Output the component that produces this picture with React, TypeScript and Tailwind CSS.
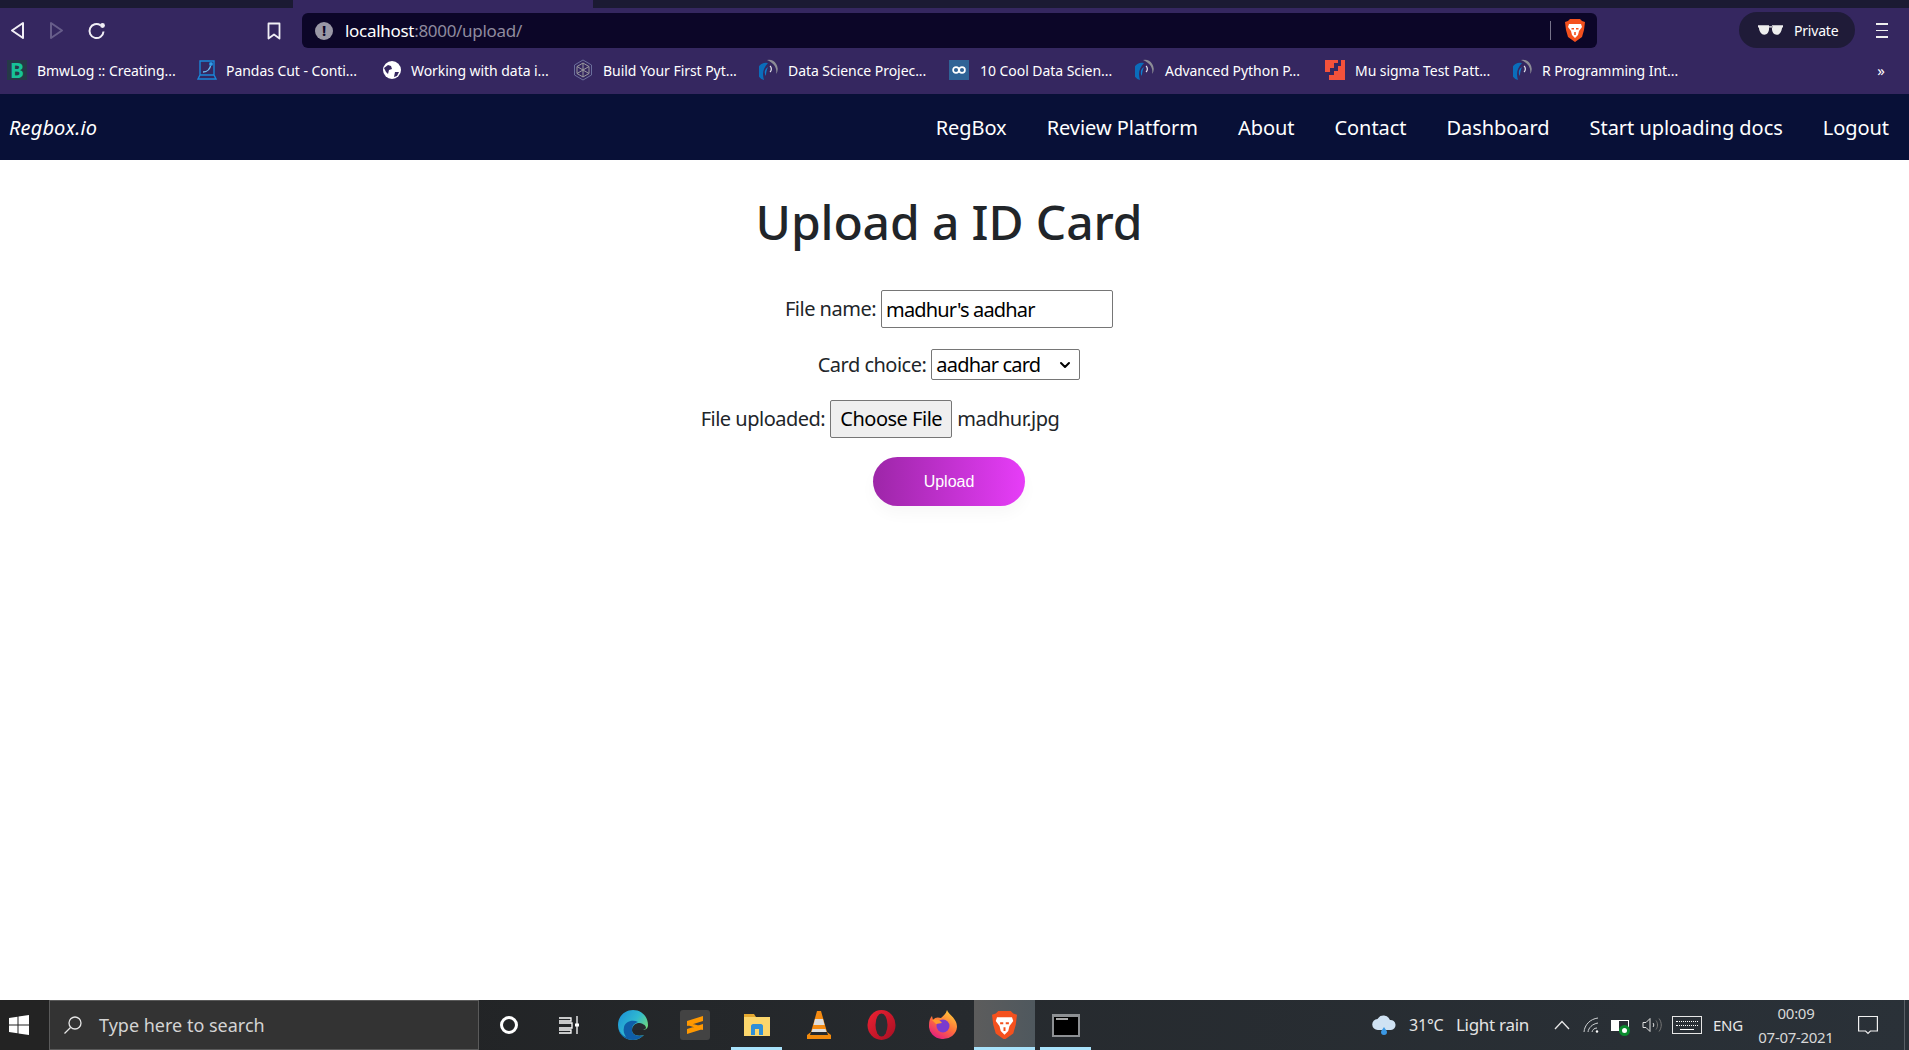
import { ChevronDown } from 'lucide-react';

const ui = "font-['Noto_Sans','Open_Sans',sans-serif]";

function Flaky() {
  return (
    <svg width="20" height="22" viewBox="0 0 20 22" className="shrink-0">
      <path d="M9 4A8.500 8.500 0 0 0 5 21C3 15 4 9 9 4Z" fill="#0a6dbb" />
      <path d="M9 8a6 6 0 0 0-2 9c0-3 .5-6 2-9Z" fill="#0d7fd0" />
      <path d="M8 1a9 9 0 0 1 9 14c1.500-6-2-11-9-14Z" fill="#8d8d96" />
      <path d="M11 7c1.800 1.500 1.800 4.500 0 6" stroke="#e8e8ee" strokeWidth="1.200" fill="none" />
    </svg>
  );
}

function BookmarkIcon({ kind }: { kind: string }) {
  if (kind === 'b') {
    return (
      <span className="flex h-5 w-5 shrink-0 items-center justify-center bg-[#263a48] text-[21px] leading-none font-bold text-[#17c397]">
        B
      </span>
    );
  }
  if (kind === 'pandas') {
    return (
      <svg width="20" height="22" viewBox="0 0 20 22" fill="none" stroke="#1a86d8" strokeWidth="1.400" className="shrink-0">
        <path d="M3 2h14v14H3zM1 20l2-4h14l2 4z" />
        <path d="M6 13c4 0 7-2 8-8" stroke="#6fbdf0" />
        <circle cx="14" cy="5" r="1.400" fill="#6fbdf0" />
      </svg>
    );
  }
  if (kind === 'globe') {
    return (
      <svg width="18" height="18" viewBox="0 0 18 18" className="shrink-0">
        <circle cx="9" cy="9" r="9" fill="#fff" />
        <path d="M1 7l4-3 3 1 1 3-3 1-1 4-2-2zM12 11h4l-2 4-3 1z" fill="#352760" />
      </svg>
    );
  }
  if (kind === 'build') {
    return (
      <svg width="20" height="22" viewBox="0 0 20 22" fill="none" stroke="#6b6f9c" strokeWidth="1" className="shrink-0">
        <path d="M10 1l8.500 5v10L10 21l-8.500-5V6z" />
        <path d="M10 4l6 3.500v7L10 18l-6-3.500v-7zM10 4v14M4 7.500l12 7M16 7.500l-12 7" stroke="#9a9a9f" />
      </svg>
    );
  }
  if (kind === 'cool') {
    return (
      <span className="flex h-5 w-5 shrink-0 items-center justify-center bg-[#2f6396]">
        <svg width="14" height="8" viewBox="0 0 14 8" fill="none" stroke="#fff" strokeWidth="1.700">
          <circle cx="4" cy="4" r="2.900" />
          <circle cx="10" cy="4" r="2.900" />
        </svg>
      </span>
    );
  }
  if (kind === 'mu') {
    return (
      <svg width="20" height="20" viewBox="0 0 20 20" className="shrink-0">
        <path d="M0 0h13v3H9v5H5v4H0z" fill="#f4523b" />
        <path d="M20 0v20H4v-5h5v-4h4V6h3V0z" fill="#f4523b" />
      </svg>
    );
  }
  return <Flaky />;
}

const bookmarks = [
  { kind: 'b', label: 'BmwLog :: Creating...', width: 'w-[190px]', gap: 'gap-[10px]' },
  { kind: 'pandas', label: 'Pandas Cut - Conti...', width: 'w-[186px]', gap: 'gap-[9px]' },
  { kind: 'globe', label: 'Working with data i...', width: 'w-[190px]', gap: 'gap-[10px]' },
  { kind: 'build', label: 'Build Your First Pyt...', width: 'w-[186px]', gap: 'gap-[10px]' },
  { kind: 'flaky', label: 'Data Science Projec...', width: 'w-[190px]', gap: 'gap-[9px]' },
  { kind: 'cool', label: '10 Cool Data Scien...', width: 'w-[186px]', gap: 'gap-[11px]' },
  { kind: 'flaky', label: 'Advanced Python P...', width: 'w-[190px]', gap: 'gap-[10px]' },
  { kind: 'mu', label: 'Mu sigma Test Patt...', width: 'w-[188px]', gap: 'gap-[10px]' },
  { kind: 'flaky', label: 'R Programming Int...', width: 'w-[190px]', gap: 'gap-[9px]' },
];

function BraveLion({ size = 20 }: { size?: number }) {
  return (
    <svg width={size} height={size * 1.15} viewBox="0 0 20 23">
      <path d="M5 0h10l2 2 3 1-1 8-2 7-7 5-7-5-2-7-1-8 3-1z" fill="#f4511e" />
      <path d="M4 5l4 0h4l4 0 1 3-3 4-1 4-3 3-3-3-1-4-3-4z" fill="#fff" />
      <path d="M6.500 9h2.500v1.500H6.500zM11 9h2.500v1.500H11zM9.200 13h1.600v3H9.200z" fill="#f4511e" />
    </svg>
  );
}

function BrowserChrome() {
  return (
    <div className={`bg-[#352760] ${ui}`}>
      <div className="flex h-2 bg-[#1b1a33]">
        <div className="ml-[293px] w-[300px] bg-[#352760]" />
      </div>
      <div className="flex h-[40px] items-end">
        <div className="flex h-[35px] w-[302px] shrink-0 items-center">
          <svg width="16" height="20" viewBox="0 0 16 20" fill="none" stroke="#f1eff6" strokeWidth="2" strokeLinejoin="round" className="ml-[9px]">
            <path d="M14 2v15L3 9.500z" />
          </svg>
          <svg width="16" height="20" viewBox="0 0 16 20" fill="none" stroke="#675d8a" strokeWidth="2" strokeLinejoin="round" className="ml-[24px]">
            <path d="M2 2v15l11-7.500z" />
          </svg>
          <svg width="20" height="20" viewBox="0 0 20 20" fill="none" className="ml-[22px]">
            <path d="M16.500 10.500a7 7 0 1 1-3-6.200" stroke="#f1eff6" strokeWidth="2" />
            <circle cx="15.500" cy="4.500" r="2.400" fill="#f1eff6" />
          </svg>
          <svg width="14" height="18" viewBox="0 0 14 18" fill="none" stroke="#f1eff6" strokeWidth="1.800" strokeLinejoin="round" className="ml-[160px]">
            <path d="M1.500 1.500h11v15L7 12.500l-5.500 4z" />
          </svg>
        </div>
        <div className="flex h-[35px] w-[1295px] shrink-0 items-center rounded-md bg-[#0c0628]">
          <span className="ml-[13px] flex h-[18px] w-[18px] items-center justify-center rounded-full bg-[#9a98a6] text-[15px] leading-none font-bold text-[#0c0628]">
            !
          </span>
          <span className="ml-[12px] text-[17px] tracking-[-0.3px] text-white">
            localhost<span className="text-[#8f8b9f]">:8000/upload/</span>
          </span>
          <div className="ml-auto h-[19px] w-px bg-[#77738a]" />
          <div className="mr-[12px] ml-[14px] flex">
            <BraveLion size={20} />
          </div>
        </div>
        <div className="ml-[142px] flex h-9 w-[116px] shrink-0 items-center rounded-full bg-[#1f1b38]">
          <svg width="25" height="10" viewBox="0 0 26 10" fill="#eeeeee" className="ml-[19px]">
            <path d="M0 0h11.500v3.500C11.500 7 9.500 10 6.500 10 3.500 10 1.500 7 1 3L0 2zM26 0H14.500v3.500c0 3.500 2 6.500 5 6.500s5-3 5.500-7l1-1zM11 1h4v1.500h-4z" />
          </svg>
          <span className="ml-[11px] text-[14px] tracking-[-0.2px] text-white">Private</span>
        </div>
        <div className="ml-[21px] flex h-[35px] w-3 flex-col items-center justify-center gap-[5px]">
          <div className="h-[1.500px] w-3 bg-[#eeeeee]" />
          <div className="h-[1.500px] w-3 bg-[#eeeeee]" />
          <div className="h-[1.500px] w-3 bg-[#eeeeee]" />
        </div>
      </div>
      <div className="flex h-[46px] items-center pr-[24px] pb-[2px] pl-[7px] text-[14px] text-white">
        {bookmarks.map((b) => (
          <div key={b.label} className={`flex shrink-0 items-center ${b.width} ${b.gap}`}>
            <BookmarkIcon kind={b.kind} />
            <span className="tracking-[-0.05px] whitespace-nowrap">{b.label}</span>
          </div>
        ))}
        <span className="ml-auto text-[15px] leading-none">»</span>
      </div>
    </div>
  );
}

function Navbar() {
  const links = ['RegBox', 'Review Platform', 'About', 'Contact', 'Dashboard', 'Start uploading docs', 'Logout'];
  return (
    <nav className={`flex h-[66px] items-center justify-between bg-[#081037] pt-[2px] pr-[20px] pl-[9px] text-[#ffffff] ${ui}`}>
      <a className="text-[20px] tracking-[0.12px] italic">Regbox.io</a>
      <ul className="flex gap-[40px] text-[20px] tracking-[-0.05px]">
        {links.map((l) => (
          <li key={l}>{l}</li>
        ))}
      </ul>
    </nav>
  );
}

function UploadForm() {
  return (
    <main className={`flex flex-1 flex-col items-center bg-white pr-[11px] text-[20px] tracking-[-0.5px] text-[#212529] ${ui}`}>
      <h1 className="mt-[27px] text-[48px] leading-[70px] font-medium tracking-[-0.12px]">Upload a ID Card</h1>
      <form className="mt-[33px] flex flex-col items-center">
        <p className="flex items-center gap-[5px]">
          <label>File name:</label>
          <input
            readOnly
            value="madhur's aadhar"
            className="h-[38px] w-[232px] rounded-[2px] border border-[#767676] px-1 tracking-[-0.85px] text-black outline-none"
          />
        </p>
        <p className="mt-[21px] flex items-center gap-[5px]">
          <label>Card choice:</label>
          <span className="flex h-[31px] w-[149px] items-center justify-between rounded-[2px] border border-[#767676] pr-[6px] pl-1 tracking-[-0.8px] text-black">
            aadhar card
            <ChevronDown size={16} strokeWidth={3} />
          </span>
        </p>
        <p className="mt-[20px] flex items-center gap-[5px]">
          <label>File uploaded:</label>
          <button type="button" className="h-[38px] w-[122px] rounded-[2px] border border-[#767676] bg-[#efefef] text-black">
            Choose File
          </button>
          <span>madhur.jpg</span>
          <span className="w-[133px]" />
        </p>
        <button
          type="button"
          className="mt-[19px] h-[49px] w-[152px] rounded-full bg-gradient-to-r from-[#9d26a8] to-[#e73df8] font-['Liberation_Sans',sans-serif] text-[16px] tracking-normal text-white shadow-[0_8px_15px_rgba(0,0,0,0.03)]"
        >
          Upload
        </button>
      </form>
    </main>
  );
}

function Slot({ width, active, open, children }: { width: string; active?: boolean; open?: boolean; children: React.ReactNode }) {
  return (
    <div className={`relative flex h-full shrink-0 items-center justify-center ${width} ${active ? 'bg-gradient-to-r from-[#5c5c5c] to-[#4f585e]' : ''}`}>
      {children}
      {open ? <div className={`absolute bottom-0 h-[3px] bg-[#a8e2fb] ${active ? 'inset-x-0' : 'inset-x-[5px]'}`} /> : null}
    </div>
  );
}

function Taskbar() {
  return (
    <div className={`flex h-[50px] items-stretch bg-gradient-to-r from-[#1f1f1f] via-[#262a2e] to-[#2a3138] text-white ${ui}`}>
      <div className="flex w-[49px] shrink-0 items-center bg-[#232323] pl-[9px]">
        <svg width="20" height="20" viewBox="0 0 20 20" fill="#fff">
          <path d="M0 3l8.500-1.300v7.800H0zM9.500 1.500L20 0v9.500H9.500zM0 10.500h8.500v7.800L0 17zM9.500 10.500H20V20L9.500 18.500z" />
        </svg>
      </div>
      <div className="flex w-[430px] shrink-0 items-center border border-[#5a5a5a] bg-[#333333] text-[#d4d4d4]">
        <svg width="20" height="20" viewBox="0 0 20 20" fill="none" stroke="#e6e6e6" strokeWidth="1.300" className="ml-[13px]">
          <circle cx="12" cy="8" r="6" />
          <path d="M7.500 12.500L1.500 18.500" />
        </svg>
        <span className="ml-[16px] text-[18px]">Type here to search</span>
      </div>
      <Slot width="w-[60px]">
        <div className="h-[18px] w-[18px] rounded-full border-[3px] border-white" />
      </Slot>
      <Slot width="w-[60px]">
        <svg width="22" height="20" viewBox="0 0 22 20" fill="none" stroke="#fff" strokeWidth="1.300">
          <path d="M1 3h12v3H1M1 8h13v5H1M1 15h12v3H1M19 1v18" />
          <rect x="17" y="8.500" width="4" height="3" fill="#fff" stroke="none" />
        </svg>
      </Slot>
      <div className="ml-[4px] flex items-stretch">
        <Slot width="w-[60px]">
          <svg width="30" height="30" viewBox="0 0 30 30">
            <defs>
              <linearGradient id="edgeA" x1="0" y1="0" x2="1" y2="0.700">
                <stop offset="0" stopColor="#1a8ed8" />
                <stop offset="0.550" stopColor="#2fb8d0" />
                <stop offset="1" stopColor="#7be06d" />
              </linearGradient>
            </defs>
            <path d="M15 0C24 0 30 7 30 15c0 3-2 5-6 5H14c0 4 4 7 12 5-3 3-7 5-11 5C7 30 0 24 0 15S7 0 15 0Z" fill="url(#edgeA)" />
            <path d="M0 15c0 9 7 15 15 15 4 0 8-2 11-5-8 2-12-1-12-5 0-5 3-7 6-8-6-3-13 0-14 5-1 4 0 7 2 10C4 25 0 21 0 15Z" fill="#0f5ea8" />
            <path d="M14 20c0-3 2-6 6-7 4 0 8 2 8 5-1 1.500-2.500 2-4 2Z" fill="#272c30" />
          </svg>
        </Slot>
        <Slot width="w-[63px]">
          <div className="flex h-[30px] w-[30px] items-center justify-center rounded-[3px] bg-[#434343]">
            <svg width="18" height="20" viewBox="0 0 18 20" fill="#ff9800">
              <path d="M17 1v5L1 11V6zM17 9v5L1 19v-5zM1 7l16 5v3L1 10z" />
            </svg>
          </div>
        </Slot>
        <Slot width="w-[61px]" open>
          <svg width="28" height="26" viewBox="0 0 28 26">
            <path d="M1 2h10l2 3H1z" fill="#e4a82f" />
            <path d="M1 5h26v19H1z" fill="#fbd66c" />
            <path d="M8 23V14c0-1 1-2 2-2h8c1 0 2 1 2 2v9h-4v-6h-4v6z" fill="#2f8fd8" />
          </svg>
        </Slot>
        <Slot width="w-[63px]">
          <svg width="26" height="30" viewBox="0 0 26 30">
            <path d="M11 1h4l6 21H5z" fill="#f48a11" />
            <path d="M9 9h8l1.500 6h-11z" fill="#dedede" />
            <path d="M6.500 19h13l1 3h-15z" fill="#dedede" />
            <path d="M5 22l-4 3v4h24v-4l-4-3 1 3H4z" fill="#f28a0c" />
          </svg>
        </Slot>
        <Slot width="w-[62px]">
          <svg width="29" height="30" viewBox="0 0 29 30">
            <defs>
              <linearGradient id="operaA" x1="0" y1="0" x2="1" y2="1">
                <stop offset="0" stopColor="#ee2233" />
                <stop offset="1" stopColor="#a70f23" />
              </linearGradient>
            </defs>
            <ellipse cx="14.500" cy="15" rx="14" ry="15" fill="url(#operaA)" />
            <ellipse cx="14.500" cy="15" rx="6" ry="11.500" fill="#2a2e33" />
          </svg>
        </Slot>
        <Slot width="w-[62px]">
          <svg width="28" height="30" viewBox="0 0 28 30">
            <defs>
              <linearGradient id="foxA" x1="0.800" y1="0" x2="0.200" y2="1">
                <stop offset="0" stopColor="#ffd23a" />
                <stop offset="0.500" stopColor="#ff7139" />
                <stop offset="1" stopColor="#e31587" />
              </linearGradient>
            </defs>
            <path d="M18 0c1 4 10 8 10 17a14 13 0 1 1-28-2c0-4 1-7 3-9l1 4c2-3 5-3 8-2 2-2 5-4 6-8Z" fill="url(#foxA)" />
            <circle cx="14" cy="16" r="6.500" fill="#7a3bcf" />
            <path d="M3 10c4-2 8 0 10 3l-6 1z" fill="#ff9a2e" />
          </svg>
        </Slot>
        <Slot width="w-[61px]" active open>
          <BraveLion size={25} />
        </Slot>
        <Slot width="w-[61px]" open>
          <div className="h-[23px] w-[28px] border-2 border-t-[3px] border-[#8d9093] bg-black pl-[2px]">
            <div className="mt-px h-[2px] w-[12px] bg-[#a8a8a8]" />
          </div>
        </Slot>
      </div>
      <div className="ml-auto flex h-full items-center">
        <svg width="26" height="20" viewBox="0 0 26 20" className="mr-[12px]">
          <path d="M7 15a5.500 5.500 0 0 1-.5-11A7 7 0 0 1 19 5a5 5 0 0 1 1 10z" fill="#cfe2f3" />
          <path d="M13 12c2 3 3 4 3 5a3 3 0 0 1-6 0c0-1 1-2 3-5z" fill="#3b98e4" />
        </svg>
        <span className="w-[47px] text-[16px] tracking-[-0.2px] text-[#e4e4e4]">31°C</span>
        <span className="w-[74px] text-[17px] tracking-[-0.3px] whitespace-nowrap text-[#e4e4e4]">Light rain</span>
        <svg width="16" height="10" viewBox="0 0 16 10" fill="none" stroke="#e8e8e8" strokeWidth="1.300" className="ml-[24px]">
          <path d="M1 9l7-7.500L15 9" />
        </svg>
        <svg width="16" height="16" viewBox="0 0 16 16" fill="none" stroke="#cfd2d4" strokeWidth="1" className="ml-[13px]">
          <path d="M1 15C1.500 8 7 2 15 1M5 15c.5-4 4-8 10-9M9 15c.5-2 2-4 5-4" />
          <circle cx="14" cy="14.500" r="1.200" fill="#fff" stroke="none" />
        </svg>
        <div className="relative ml-[12px] h-[11px] w-[18px] border border-white">
          <div className="h-full w-[7px] bg-white" />
          <div className="absolute -right-[2px] -bottom-[6px] flex h-[11px] w-[11px] items-center justify-center rounded-full bg-[#0a8a2e]">
            <div className="h-[5px] w-[5px] rounded-full bg-white" />
          </div>
        </div>
        <svg width="20" height="16" viewBox="0 0 20 16" fill="none" stroke="#e0e0e0" strokeWidth="1" className="ml-[13px]">
          <path d="M1 5.500h3l4-4v13l-4-4H1zM11 6c1 1 1 3 0 4" />
          <path d="M14 3.500c2 2.500 2 6.500 0 9M17 1.500c3 4 3 9 0 13" stroke="#777" />
        </svg>
        <div className="ml-[10px] flex h-[18px] w-[30px] flex-col items-center justify-center gap-[3px] border border-[#e6e6e6]">
          <div className="h-px w-[22px] border-t border-dotted border-white" />
          <div className="h-px w-[22px] border-t border-dotted border-white" />
          <div className="h-px w-[14px] bg-white" />
        </div>
        <span className="ml-[11px] w-[32px] text-[15px] tracking-[-0.3px] text-[#e8e8e8]">ENG</span>
        <div className="ml-[10px] flex w-[82px] flex-col items-center text-[15px] leading-[24px] tracking-[-0.3px] text-[#d8d8d8]">
          <span>00:09</span>
          <span>07-07-2021</span>
        </div>
        <svg width="20" height="20" viewBox="0 0 20 20" fill="none" stroke="#f0f0f0" strokeWidth="1.200" className="ml-[21px]">
          <path d="M.6 1.500h18.800v14.500h-7l-2.400 2.400L7.600 16h-7z" />
        </svg>
        <div className="ml-[26px] h-full w-[5px] border-l border-[#5a6066]" />
      </div>
    </div>
  );
}

export default function App() {
  return (
    <div className="flex h-[1050px] w-full flex-col overflow-hidden">
      <BrowserChrome />
      <Navbar />
      <UploadForm />
      <Taskbar />
    </div>
  );
}
